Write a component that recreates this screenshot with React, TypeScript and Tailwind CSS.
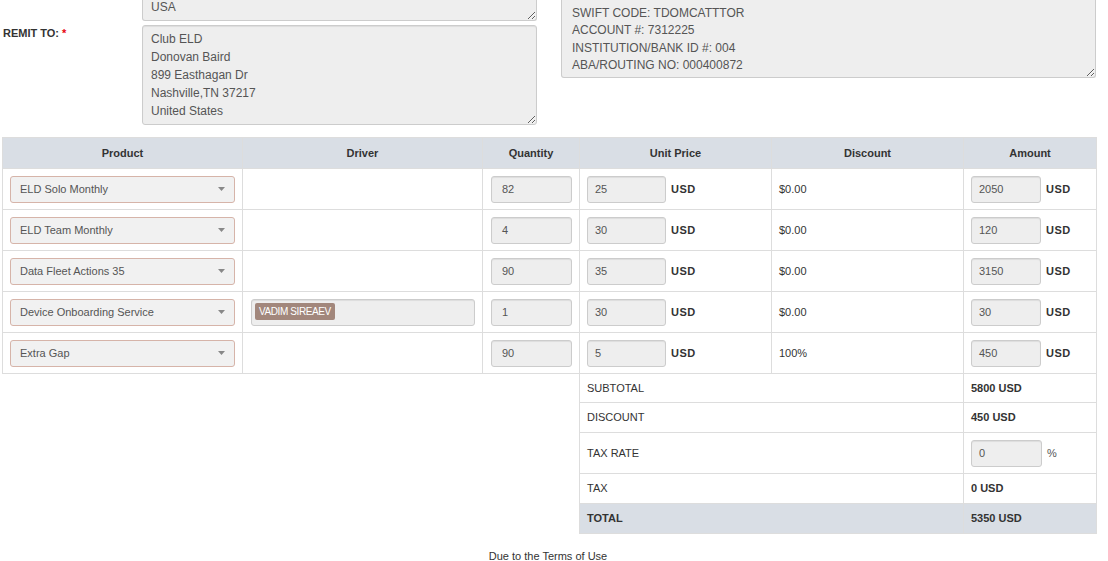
import React from 'react';

const items = [
  { product: 'ELD Solo Monthly', driver: '', qty: '82', price: '25', discount: '$0.00', amount: '2050' },
  { product: 'ELD Team Monthly', driver: '', qty: '4', price: '30', discount: '$0.00', amount: '120' },
  { product: 'Data Fleet Actions 35', driver: '', qty: '90', price: '35', discount: '$0.00', amount: '3150' },
  { product: 'Device Onboarding Service', driver: 'VADIM SIREAEV', qty: '1', price: '30', discount: '$0.00', amount: '30' },
  { product: 'Extra Gap', driver: '', qty: '90', price: '5', discount: '100%', amount: '450' },
];

const field =
  'h-[27px] rounded-[3px] border border-[#ccc] bg-[#eee] text-[11px] text-[#555] flex items-center shadow-[inset_0_1px_1px_rgba(0,0,0,0.075)]';

function ProductSelect({ name }: { name: string }) {
  return (
    <div className="h-[27px] w-full rounded-[3px] border border-[#d6b4a9] bg-[#f1f1f1] flex items-center justify-between pl-[9px] pr-[9px] text-[11px] text-[#555]">
      <span>{name}</span>
      <svg width="7" height="4" viewBox="0 0 7 4">
        <path d="M0 0h7L3.5 4z" fill="#888" />
      </svg>
    </div>
  );
}

function Usd({ value, width }: { value: string; width: string }) {
  return (
    <div className="flex items-center gap-[5px]">
      <div className={`${field} ${width} pl-[7px]`}>{value}</div>
      <span className="text-[11px] font-bold tracking-[0.5px] text-[#333]">USD</span>
    </div>
  );
}

export default function App() {
  const cell = 'border border-[#ddd] px-[7px] text-[#333]';
  return (
    <div className="w-[1108px] font-['Liberation_Sans',Arial,sans-serif] text-[#333] bg-white">
      {/* addresses */}
      <div className="flex">
        <div className="flex flex-col gap-[4px]">
          <div className="flex">
            <div className="w-[142px]" />
            <textarea
              readOnly
              value="USA"
              className="w-[395px] h-[21px] rounded-b-[3px] border border-t-0 border-[#ccc] bg-[#eee] px-[8px] pt-[1px] text-[12px] leading-[12px] text-[#555] overflow-hidden outline-none"
            />
          </div>
          <div className="flex">
            <div className="w-[142px] pl-[3px] pt-[1px] text-[11px] font-bold leading-[14px]">
              REMIT TO: <span className="text-red-600">*</span>
            </div>
            <textarea
              readOnly
              value={'Club ELD\nDonovan Baird\n899 Easthagan Dr\nNashville,TN 37217\nUnited States'}
              className="w-[395px] h-[100px] rounded-[3px] border border-[#ccc] bg-[#eee] px-[8px] pt-[4px] text-[12px] leading-[18px] text-[#555] overflow-hidden outline-none shadow-[inset_0_1px_1px_rgba(0,0,0,0.075)]"
            />
          </div>
        </div>
        <div className="ml-[24px]">
          <textarea
            readOnly
            value={'SWIFT CODE: TDOMCATTTOR\nACCOUNT #: 7312225\nINSTITUTION/BANK ID #: 004\nABA/ROUTING NO: 000400872'}
            className="w-[535px] h-[78px] rounded-b-[3px] border border-t-0 border-[#ccc] bg-[#eee] px-[10px] pt-[5px] text-[12px] leading-[17.3px] text-[#555] overflow-hidden outline-none"
          />
        </div>
      </div>

      {/* line items */}
      <table className="mt-[12px] ml-[2px] w-[1094px] table-fixed border-collapse text-[11px]">
        <colgroup>
          <col className="w-[240px]" />
          <col className="w-[240px]" />
          <col className="w-[97px]" />
          <col className="w-[192px]" />
          <col className="w-[192px]" />
          <col className="w-[133px]" />
        </colgroup>
        <thead>
          <tr className="bg-[#d9dee5]">
            {['Product', 'Driver', 'Quantity', 'Unit Price', 'Discount', 'Amount'].map((h) => (
              <th key={h} className={`${cell} h-[31px] text-center font-bold`}>
                {h}
              </th>
            ))}
          </tr>
        </thead>
        <tbody>
          {items.map((it) => (
            <tr key={it.product}>
              <td className={`${cell} h-[41px]`}>
                <ProductSelect name={it.product} />
              </td>
              <td className={`${cell} pl-[8px]`}>
                {it.driver && (
                  <div className={`${field} w-full items-start pt-[3px] pl-[3px]`}>
                    <span className="h-[17px] px-[4px] rounded-[2px] bg-[#a2877c] text-white text-[10px] tracking-[-0.4px] leading-[17px]">
                      {it.driver}
                    </span>
                  </div>
                )}
              </td>
              <td className={`${cell} pl-[8px]`}>
                <div className={`${field} w-full pl-[10px]`}>{it.qty}</div>
              </td>
              <td className={cell}>
                <Usd value={it.price} width="w-[79px]" />
              </td>
              <td className={cell}>{it.discount}</td>
              <td className={cell}>
                <Usd value={it.amount} width="w-[70px]" />
              </td>
            </tr>
          ))}

          {/* totals */}
          <tr>
            <td colSpan={3} className="border-0" />
            <td colSpan={2} className={`${cell} h-[29px]`}>SUBTOTAL</td>
            <td className={`${cell} font-bold`}>5800 USD</td>
          </tr>
          <tr>
            <td colSpan={3} className="border-0" />
            <td colSpan={2} className={`${cell} h-[30px]`}>DISCOUNT</td>
            <td className={`${cell} font-bold`}>450 USD</td>
          </tr>
          <tr>
            <td colSpan={3} className="border-0" />
            <td colSpan={2} className={`${cell} h-[41px]`}>TAX RATE</td>
            <td className={cell}>
              <div className="flex items-center gap-[5px]">
                <div className={`${field} w-[71px] pl-[7px]`}>0</div>
                <span className="text-[11px] text-[#555]">%</span>
              </div>
            </td>
          </tr>
          <tr>
            <td colSpan={3} className="border-0" />
            <td colSpan={2} className={`${cell} h-[30px]`}>TAX</td>
            <td className={`${cell} font-bold`}>0 USD</td>
          </tr>
          <tr>
            <td colSpan={3} className="border-0" />
            <td colSpan={2} className={`${cell} h-[30px] bg-[#d9dee5] font-bold`}>TOTAL</td>
            <td className={`${cell} bg-[#d9dee5] font-bold`}>5350 USD</td>
          </tr>
        </tbody>
      </table>

      <p className="mt-[14px] w-[1096px] text-center text-[11px]">Due to the Terms of Use</p>
    </div>
  );
}
